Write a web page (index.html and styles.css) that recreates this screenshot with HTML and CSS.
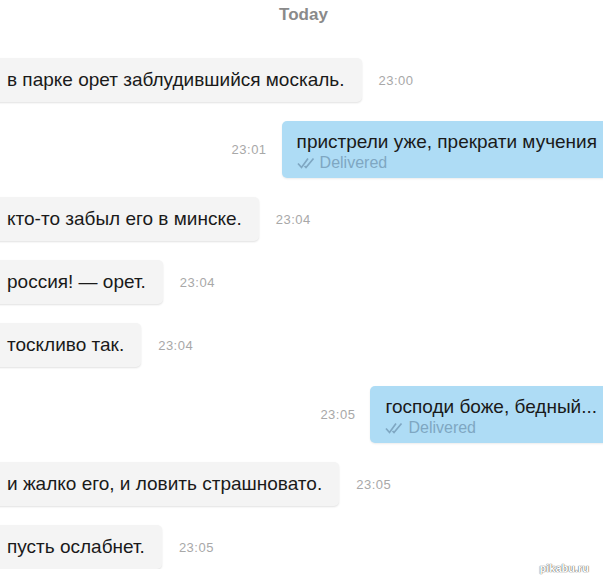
FILE: index.html
```html
<!DOCTYPE html>
<html lang="ru">
<head>
    <meta charset="UTF-8">
    <title>Today</title>
    <link rel="stylesheet" href="styles.css">
</head>
<body>

<div class="chat">
    <div class="day">Today</div>

    <div class="row in">
        <div class="bubble">в парке орет заблудившийся москаль.</div>
        <span class="time">23:00</span>
    </div>

    <div class="row out">
        <span class="time">23:01</span>
        <div class="bubble">
            <div>пристрели уже, прекрати мучения</div>
            <div class="status">
                <svg width="19" height="12" viewBox="0 0 19 12"><path d="M1 6.5 L4.5 10.5 L11 1.5 M7.5 9 L9 10.5 L16.5 1.5" fill="none" stroke="#7fa7c2" stroke-width="1.7"/></svg>
                Delivered
            </div>
        </div>
    </div>

    <div class="row in">
        <div class="bubble">кто-то забыл его в минске.</div>
        <span class="time">23:04</span>
    </div>

    <div class="row in">
        <div class="bubble">россия! — орет.</div>
        <span class="time">23:04</span>
    </div>

    <div class="row in">
        <div class="bubble">тоскливо так.</div>
        <span class="time">23:04</span>
    </div>

    <div class="row out">
        <span class="time">23:05</span>
        <div class="bubble">
            <div>господи боже, бедный...</div>
            <div class="status">
                <svg width="19" height="12" viewBox="0 0 19 12"><path d="M1 6.5 L4.5 10.5 L11 1.5 M7.5 9 L9 10.5 L16.5 1.5" fill="none" stroke="#7fa7c2" stroke-width="1.7"/></svg>
                Delivered
            </div>
        </div>
    </div>

    <div class="row in">
        <div class="bubble">и жалко его, и ловить страшновато.</div>
        <span class="time">23:05</span>
    </div>

    <div class="row in">
        <div class="bubble">пусть ослабнет.</div>
        <span class="time">23:05</span>
    </div>
</div>

<div class="watermark">pikabu.ru</div>

</body>
</html>
```

FILE: styles.css
```css
body {
    margin: 0;
    background: #ffffff;
    font-family: "Liberation Sans", Arial, sans-serif;
    color: #1a1a1a;
    overflow: hidden;
}
.chat {
    display: flex;
    flex-direction: column;
    gap: 19px;
    padding-top: 4px;
}
.day {
    text-align: center;
    font-weight: bold;
    font-size: 17px;
    line-height: 22px;
    color: #8a8a8a;
    padding-left: 4px;
    margin-bottom: 13px;
}
.row {
    display: flex;
    align-items: center;
    gap: 17px;
}
.row.in {
    margin-left: -6px;
}
.row.out {
    justify-content: flex-end;
    gap: 15px;
    margin-right: -30px;
}
.bubble {
    background: #f4f4f4;
    border-radius: 5px;
    box-shadow: 0 1px 2px rgba(0, 0, 0, 0.12);
    padding: 11px 17px 11px 13px;
    font-size: 19px;
    line-height: 22px;
}
.row.out .bubble {
    background: #aedcf5;
    box-shadow: 0 1px 2px rgba(0, 0, 0, 0.08);
    padding: 10px 36px 6px 15px;
}
.status {
    display: flex;
    align-items: center;
    gap: 4px;
    font-size: 16px;
    line-height: 19px;
    color: #7fa7c2;
}
.time {
    font-size: 13px;
    letter-spacing: 0.5px;
    color: #a8a8a8;
}
.watermark {
    position: absolute;
    right: 14px;
    bottom: 3px;
    font-size: 11px;
    font-weight: bold;
    color: #ffffff;
    text-shadow: 0 0 1px #555, 0 0 1px #555;
}
```
